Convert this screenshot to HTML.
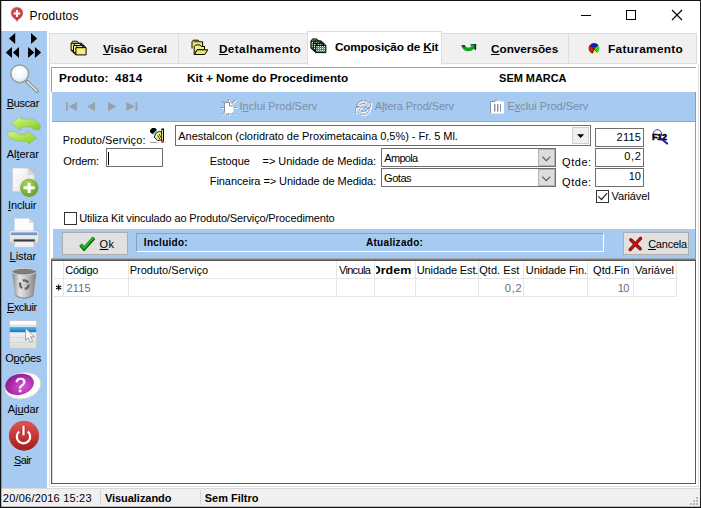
<!DOCTYPE html>
<html>
<head>
<meta charset="utf-8">
<title>Produtos</title>
<style>
*{box-sizing:border-box;margin:0;padding:0}
html,body{width:701px;height:508px;overflow:hidden;background:#f0f0f0}
body{font-family:"Liberation Sans",sans-serif;font-size:11px;color:#000;position:relative}
#w,#w div,#w svg{position:absolute}
#w{left:0;top:0;width:701px;height:508px;overflow:hidden}
u{text-decoration:underline;text-decoration-thickness:1px;text-underline-offset:1px}
.t{white-space:nowrap}
.blue{background:#a6caf0}
.inp{background:#fff;border:1px solid #6e6e6e}
.btn{background:#e1e1e1;border:1px solid #adadad}
.vl{top:261px;width:1px;height:36px;background:#e6e6e6}
.hl{left:52px;width:625px;height:1px;background:#e6e6e6}
.sep{top:490px;width:1px;height:15px;background:#d4d4d4}
</style>
</head>
<body>
<div id="w">
  <!-- title bar -->
  <div style="left:0;top:0;width:701px;height:31px;background:#fff"></div>
  <!-- sidebar -->
  <div class="blue" style="left:1px;top:31px;width:46px;height:457px"></div>
  <!-- tab page -->
  <div style="left:47px;top:31px;width:653px;height:457px;background:#fff"></div>
    <div style="left:49px;top:64px;width:650px;height:423px;background:#fff;border:1px solid #dcdcdc;border-top-color:#fcfcfc"></div>
      <!-- tabs -->
  <div style="left:49px;top:33px;width:130px;height:31px;background:#f0f0f0;border:1px solid #dcdcdc"></div>
  <div style="left:178px;top:33px;width:130px;height:31px;background:#f0f0f0;border:1px solid #dcdcdc"></div>
  <div style="left:441px;top:33px;width:128px;height:31px;background:#f0f0f0;border:1px solid #dcdcdc"></div>
  <div style="left:568px;top:33px;width:129px;height:31px;background:#f0f0f0;border:1px solid #dcdcdc"></div>
  <div style="left:307px;top:31px;width:135px;height:34px;background:#fff;border:1px solid #dcdcdc;border-bottom:none"></div>
  <!-- inner panel (sunken) -->
  <div style="left:51px;top:67px;width:645px;height:1px;background:#a0a0a0"></div>
  <div style="left:51px;top:67px;width:1px;height:26px;background:#a0a0a0"></div>
  <!-- toolbar -->
  <div class="blue" style="left:52px;top:92px;width:643px;height:29px"></div>
  <div style="left:51px;top:121px;width:645px;height:1px;background:#a4a4a4"></div>
  <div style="left:695px;top:92px;width:1px;height:168px;background:#9a9a9a"></div>
  <div style="left:51px;top:92px;width:1px;height:168px;background:#fff"></div>
  <!-- form fields -->
  <div class="inp" style="left:106px;top:148px;width:57px;height:19px"></div>
  <div style="left:108px;top:152px;width:1px;height:13px;background:#000"></div>
  <div class="inp" style="left:175px;top:125px;width:416px;height:21px"></div>
  <div style="left:572px;top:127px;width:17px;height:17px;background:#f0f0f0;border:1px solid #cfcfcf"></div>
  <div class="inp" style="left:381px;top:148px;width:175px;height:19px"></div>
  <div style="left:538px;top:149px;width:17px;height:17px;background:#dddddd;border:1px solid #b4b4b4"></div>
  <div class="inp" style="left:381px;top:168px;width:175px;height:19px"></div>
  <div style="left:538px;top:169px;width:17px;height:17px;background:#dddddd;border:1px solid #b4b4b4"></div>
  <div class="inp" style="left:595px;top:128px;width:49px;height:19px"></div>
  <div class="inp" style="left:595px;top:148px;width:49px;height:19px"></div>
  <div class="inp" style="left:595px;top:168px;width:49px;height:19px"></div>
  <div style="left:596px;top:190px;width:13px;height:13px;background:#fff;border:1px solid #333"></div>
  <div style="left:64px;top:212px;width:13px;height:13px;background:#fff;border:1px solid #333"></div>
  <!-- blue bar -->
  <div class="blue" style="left:53px;top:229px;width:642px;height:29px"></div>
  <div class="btn" style="left:62px;top:232px;width:66px;height:23px"></div>
  <div class="btn" style="left:623px;top:232px;width:66px;height:23px"></div>
  <div style="left:136px;top:233px;width:468px;height:19px;border:1px solid #8ca0b8;border-right-color:#fff;border-bottom-color:#fff"></div>
  <!-- grid -->
  <div style="left:51px;top:258px;width:645px;height:226px;background:#fff;border:1px solid #5a5a5a;border-top:3px solid #585858"></div>
  <div style="left:51px;top:258px;width:645px;height:1px;background:#a4a8ac"></div>
  <div style="left:51px;top:259px;width:645px;height:1px;background:#7c7c7c"></div>
  <div style="left:52px;top:261px;width:1px;height:222px;background:#d8d8d8"></div>
  <div class="hl" style="top:278px"></div>
  <div class="hl" style="top:296px"></div>
  <div class="vl" style="left:63px"></div>
  <div class="vl" style="left:128px"></div>
  <div class="vl" style="left:336px"></div>
  <div class="vl" style="left:374px"></div>
  <div class="vl" style="left:415px"></div>
  <div class="vl" style="left:478px"></div>
  <div class="vl" style="left:523px"></div>
  <div class="vl" style="left:587px"></div>
  <div class="vl" style="left:633px"></div>
  <div class="vl" style="left:676px"></div>
  <!-- status bar -->
  <div style="left:1px;top:488px;width:699px;height:19px;background:#f0f0f0;border-top:1px solid #d9d9d9"></div>
  <div class="sep" style="left:100px"></div>
  <div class="sep" style="left:200px"></div>

  <!-- ICONS -->
  <svg style="left:0;top:0" width="701" height="508" viewBox="0 0 701 508">
    <defs>
      <radialGradient id="pin" cx="0.45" cy="0.3" r="0.8"><stop offset="0" stop-color="#e45058"/><stop offset="1" stop-color="#a82830"/></radialGradient>
      <radialGradient id="lens" cx="0.45" cy="0.35" r="0.75"><stop offset="0" stop-color="#ffffff"/><stop offset="0.550" stop-color="#f2f8ff"/><stop offset="1" stop-color="#bcd6f4"/></radialGradient>
      <linearGradient id="grn" x1="0" y1="0" x2="0.800" y2="1"><stop offset="0" stop-color="#dcf6a4"/><stop offset="0.450" stop-color="#b8e65c"/><stop offset="1" stop-color="#86cc2c"/></linearGradient>
      <linearGradient id="grn2" x1="0" y1="0" x2="0.800" y2="1"><stop offset="0" stop-color="#d4f298"/><stop offset="0.500" stop-color="#b2e252"/><stop offset="1" stop-color="#8ad030"/></linearGradient>
      <linearGradient id="doc" x1="0" y1="0" x2="1" y2="1"><stop offset="0" stop-color="#ffffff"/><stop offset="1" stop-color="#e2e2e2"/></linearGradient>
      <radialGradient id="plus" cx="0.4" cy="0.3" r="0.8"><stop offset="0" stop-color="#a8d858"/><stop offset="1" stop-color="#5c9c1c"/></radialGradient>
      <linearGradient id="prn" x1="0" y1="0" x2="0" y2="1"><stop offset="0" stop-color="#ffffff"/><stop offset="1" stop-color="#d4d4d4"/></linearGradient>
      <linearGradient id="can" x1="0" y1="0" x2="1" y2="0"><stop offset="0" stop-color="#8a8a8a"/><stop offset="0.320" stop-color="#e6e6e6"/><stop offset="0.650" stop-color="#bababa"/><stop offset="1" stop-color="#7e7e7e"/></linearGradient>
      <linearGradient id="opt" x1="0" y1="0" x2="0" y2="1"><stop offset="0" stop-color="#ffffff"/><stop offset="1" stop-color="#dcdcdc"/></linearGradient>
      <linearGradient id="optb" x1="0" y1="0" x2="0" y2="1"><stop offset="0" stop-color="#58b8ee"/><stop offset="1" stop-color="#1474c4"/></linearGradient>
      <radialGradient id="hlp" cx="0.6" cy="0.65" r="0.8"><stop offset="0" stop-color="#d858d0"/><stop offset="0.6" stop-color="#a828a8"/><stop offset="1" stop-color="#70187c"/></radialGradient>
      <linearGradient id="pwr" x1="0" y1="0" x2="0" y2="1"><stop offset="0" stop-color="#e25454"/><stop offset="1" stop-color="#a41c1c"/></linearGradient>
    </defs>
    <!-- title icon -->
    <path d="M17 21.900C16.300 20.200 15.200 19.300 13.700 18.200A6.100 6.100 0 1 1 20.300 18.200C18.800 19.300 17.700 20.200 17 21.900Z" fill="url(#pin)" stroke="#e4c4c4" stroke-width="0.600"/>
    <path d="M16 10h2v2.400h2.300v2h-2.300v2.500h-2v-2.500h-2.300v-2h2.300z" fill="#fff"/>
    <!-- window buttons -->
    <path d="M581 15.500h10" stroke="#000" stroke-width="1"/>
    <rect x="626.500" y="10.500" width="9" height="9" fill="none" stroke="#000" stroke-width="1"/>
    <path d="M672 10l10 10M682 10l-10 10" stroke="#000" stroke-width="1.100"/>
    <!-- sidebar arrows -->
    <path d="M15.200 33v11L9 38.500zM31 33v11l6.200-5.500zM12 47v11L5.800 52.500zM19 47v11l-6-5.500zM28.100 47v11l6.100-5.500zM34.900 47v11l6.200-5.500z" fill="#000"/>
    <!-- Buscar -->
    <line x1="27" y1="81.500" x2="37" y2="91.300" stroke="#8c8c8c" stroke-width="3.400" stroke-linecap="round"/>
    <line x1="27.500" y1="82" x2="36.800" y2="91" stroke="#ececec" stroke-width="1.500" stroke-linecap="round"/>
    <circle cx="19.700" cy="73.800" r="8.900" fill="url(#lens)" stroke="#9c9c9c" stroke-width="1.500"/>
    <!-- Alterar -->
    <path d="M11.100 123L20.700 116.300L21 119.100C25 118.800 29 118.800 32.400 119.400C37 120.500 40 123.500 40.500 127.200C40.300 128.500 39.600 129.400 38.800 129.700L33.800 129.400C33.200 128.300 32.200 127.500 31 127.200C28 126.600 24 126.700 21 126.900L20 130.100Z" fill="url(#grn)" stroke="#8ebc50" stroke-width="0.600"/>
    <path d="M36.600 137.900L28.800 144.300L27.400 141.400C24 141.700 21 141.600 18.200 141.100C13 140.200 9.500 138 8.300 135.400C7.500 134 7.200 133 7.200 132.200L16 131.500C16.600 132.800 17.600 133.800 18.900 134.300C21.500 134.700 24 134.500 26.700 134L27 130.800Z" fill="url(#grn2)" stroke="#8ebc50" stroke-width="0.600"/>
    <!-- Incluir -->
    <path d="M12.500 168 H28 L34.600 174.600 V191.700 H12.500 Z" fill="url(#doc)" stroke="#c4c8cc" stroke-width="0.700"/>
    <path d="M28 168 V174.600 H34.600 Z" fill="#dadada" stroke="#c4c8cc" stroke-width="0.500"/>
    <circle cx="29.200" cy="187.800" r="9.200" fill="url(#plus)"/>
    <path d="M27.700 182.800h3v3.500h4v3h-4v3.700h-3v-3.700h-4.200v-3h4.200z" fill="#fff"/>
    <!-- Listar -->
    <path d="M14.300 218.300 H29 L33.600 223 V233 H14.300Z" fill="#fdfdfd" stroke="#c8ccd0" stroke-width="0.600"/>
    <path d="M29 218.300 V223 H33.600Z" fill="#dcdcdc"/>
    <rect x="9.400" y="231" width="29.300" height="12.300" rx="2" fill="url(#prn)" stroke="#bcc0c4" stroke-width="0.700"/>
    <rect x="10.800" y="232.400" width="26.500" height="2.800" fill="#6f98cc"/>
    <path d="M15 241.200 H33.300 L34.300 247.300 H13.800 Z" fill="#f2f2f2" stroke="#c2c2c2" stroke-width="0.600"/>
    <rect x="13.800" y="239.400" width="21" height="2.100" fill="#3a3a3a"/>
    <!-- Excluir -->
    <path d="M12.200 272 L15 296 Q24.300 300.600 33.600 296 L36.300 272 Z" fill="url(#can)"/>
    <ellipse cx="24.200" cy="271.600" rx="12.300" ry="3.300" fill="#7c7c7c" stroke="#d0d0d0" stroke-width="1"/>
    <path d="M15.500 295.500Q24.300 300.800 33.100 295.500" fill="none" stroke="#8a8a8a" stroke-width="1.400"/>
    <circle cx="24.400" cy="284.600" r="4.300" fill="none" stroke="#626262" stroke-width="2.300" stroke-dasharray="6.200 2.800"/>
    <!-- Opcoes -->
    <rect x="9.700" y="320.700" width="26.600" height="27.600" fill="url(#opt)" stroke="#c6c6c6" stroke-width="0.600"/>
    <path d="M10 337.500h26M10 342.500h26M10 325.500h26" stroke="#d4d4d4" stroke-width="0.800"/>
    <rect x="9.700" y="326.800" width="26.600" height="5.400" fill="url(#optb)"/>
    <path d="M25.600 328.300 L25.600 340.300 L28.300 337.700 L30.500 342.200 L32.700 341.200 L30.500 336.800 L34.300 336.700 Z" fill="#fff" stroke="#8c8c8c" stroke-width="0.800"/>
    <!-- Ajudar -->
    <g transform="rotate(-14 22 385)">
      <ellipse cx="22.600" cy="386" rx="18.200" ry="13" fill="#fff" stroke="#ccd0d8" stroke-width="0.800"/>
      <ellipse cx="19.800" cy="383.800" rx="14.500" ry="10.400" fill="url(#hlp)"/>
    </g>
    <text x="20.400" y="392" font-family="Liberation Sans, sans-serif" font-size="19.500" fill="#fff" stroke="#fff" stroke-width="0.300" text-anchor="middle">?</text>
    <!-- Sair -->
    <circle cx="24" cy="435.700" r="15" fill="url(#pwr)"/>
    <path d="M27.800 431.500 A6.700 6.700 0 1 1 19.200 431.500" fill="none" stroke="#fff" stroke-width="2.200"/>
    <path d="M23.500 425.700 V435.400" stroke="#c03030" stroke-width="4.600"/>
    <path d="M23.500 425.700 V435.400" stroke="#fff" stroke-width="2.200"/>
    <!-- tab icons -->
    <pattern id="dg" width="2" height="2" patternUnits="userSpaceOnUse"><rect width="2" height="2" fill="#18a040"/><rect width="1" height="1" fill="#d8f8dc"/><rect x="1" y="1" width="1" height="1" fill="#48b868"/></pattern>
    <path d="M71.1 43.2H81.3V50.5H71.1Z" fill="#f4f07c" stroke="#000" stroke-width="1"/>
    <path d="M71.5 43.2L72.6 41.2H77.1L78.7 43.2Z" fill="#fbfbc8" stroke="#000" stroke-width="0.9"/>
    <path d="M73.5 45.4H83.7V52.7H73.5Z" fill="#f4f07c" stroke="#000" stroke-width="1"/>
    <path d="M73.9 45.4L75.0 43.4H79.5L81.1 45.4Z" fill="#fbfbc8" stroke="#000" stroke-width="0.9"/>
    <path d="M75.9 47.6H86.1V54.9H75.9Z" fill="#f4f07c" stroke="#000" stroke-width="1"/>
    <path d="M76.3 47.6L77.4 45.6H81.9L83.5 47.6Z" fill="#fbfbc8" stroke="#000" stroke-width="0.9"/>
    <path d="M81.3 43.2L86.1 47.6" stroke="#000" stroke-width="1"/>
    <path d="M71.1 50.5L75.9 54.9" stroke="#000" stroke-width="1"/>
    <path d="M310.9 40.9H321.1V48.2H310.9Z" fill="url(#dg)" stroke="#000" stroke-width="1"/>
    <path d="M311.3 40.9L312.4 38.9H316.9L318.5 40.9Z" fill="url(#dg)" stroke="#000" stroke-width="0.9"/>
    <path d="M313.3 43.1H323.5V50.4H313.3Z" fill="url(#dg)" stroke="#000" stroke-width="1"/>
    <path d="M313.7 43.1L314.8 41.1H319.3L320.9 43.1Z" fill="url(#dg)" stroke="#000" stroke-width="0.9"/>
    <path d="M315.7 45.3H325.9V52.6H315.7Z" fill="url(#dg)" stroke="#000" stroke-width="1"/>
    <path d="M316.1 45.3L317.2 43.3H321.7L323.3 45.3Z" fill="url(#dg)" stroke="#000" stroke-width="0.9"/>
    <path d="M321.1 40.9L325.9 45.3" stroke="#000" stroke-width="1"/>
    <path d="M310.9 48.2L315.7 52.6" stroke="#000" stroke-width="1"/>
    <path d="M192 48.500V41.800L193.200 40.200H198.200L199.400 41.800H202.600V47" fill="#f2ee7c" stroke="#000" stroke-width="1"/>
    <path d="M193.600 41.800H199" stroke="#000" stroke-width="0.800"/>
    <path d="M194.200 54.500V46.500L195.600 44.900H200L201.400 46.500H204.500V49.800H197.200Z" fill="#f2ee7c" stroke="#000" stroke-width="1"/>
    <path d="M194.400 54.500L197.200 49.800H207.800L204.800 54.500Z" fill="#ece868" stroke="#000" stroke-width="1"/>
    <path d="M461.300 45.200L464.600 45C465.500 47.500 469 48.500 471.500 46.600L469.800 44.600L476.200 43.900L476 50.200L474 48.800C470 53 463 52 461.300 45.200Z" fill="#10a818"/>
    <path d="M469.800 44.600L476.200 43.900L476 50.200L474 48.800L475 45.200Z" fill="#0a2a38"/>
    <path d="M461.300 45.200L464.600 45C465 46 465.500 46.600 466 47L463 47.500Z" fill="#0a5a14"/>
    <g>
      <path d="M594.200 48.300L589.940 45.320A5.200 5.200 0 0 1 598.180 44.960Z" fill="#1414c8"/>
      <path d="M594.200 48.300L598.180 44.960A5.200 5.200 0 0 1 597.540 52.280Z" fill="#20d838"/>
      <path d="M594.200 48.300L597.540 52.280A5.200 5.200 0 0 1 592.420 53.190Z" fill="#f8f020"/>
      <path d="M594.200 48.300L592.420 53.190A5.200 5.200 0 0 1 589.940 45.320Z" fill="#e81818"/>
      <path d="M589.940 45.320L597.540 52.280M594.200 48.300L598.180 44.960M594.200 48.300L592.420 53.190" stroke="#101010" stroke-width="0.800"/>
      <path d="M589.940 45.320A5.200 5.200 0 0 0 592.420 53.190" stroke="#301010" stroke-width="0.800" fill="none"/>
    </g>
    <!-- toolbar nav -->
    <g fill="#98a0aa">
      <rect x="66" y="102" width="1.700" height="9"/><path d="M77 102v9l-8.500-4.500z"/>
      <path d="M95 102v9l-8.200-4.500z"/>
      <path d="M108 102v9l8.400-4.500z"/>
      <path d="M126.400 102v9l8.500-4.500z"/><rect x="135.500" y="102" width="1.700" height="9"/>
    </g>
    <!-- toolbar disabled icons -->
    <g fill="none" stroke-width="1">
      <!-- inclui -->
      <path d="M224.500 102.500h5.500l3.500 3.500v7h-9z" fill="#fff" stroke="none"/>
      <path d="M222.500 101.500l2.500 2.500M229.500 100v2M236.500 100.500l-4 4M222 108.500h2.500M235 108.500h2M223 115.500l2-2M229.500 114.500v2M236 115.500l-2-2" stroke="#fff"/>
      <path d="M221.500 100.500l2.500 2.500M228.500 99v2M235.500 99.500l-3.500 3.500M221 107.500h2.500M234 107.500h2M222 114.500l2-2M228.500 113.500v2M235 114.500l-2-2" stroke="#8791a0"/>
      <path d="M224.500 112.500v-10h5M229.500 102.500v3.500h3.500" stroke="#8791a0"/>
      <!-- altera -->
      <path d="M356.500 106.500c0.500-4 3.500-6 6.500-6c2.500 0 4.500 1 6 3l1.500-1.500v5.500h-5.500l2-2c-1-1.500-2.500-2-4-2c-2 0-3.500 1-4 3z" fill="#c4dcf6" stroke="#fff" transform="translate(1 1)"/>
      <path d="M369.500 108.500c-0.500 4-3.500 6-6.500 6c-2.500 0-4.500-1-6-3l-1.500 1.500v-5.500h5.500l-2 2c1 1.500 2.500 2 4 2c2 0 3.500-1 4-3z" fill="#c4dcf6" stroke="#fff" transform="translate(1 1)"/>
      <path d="M356.500 106.500c0.500-4 3.500-6 6.500-6c2.500 0 4.500 1 6 3l1.500-1.500v5.500h-5.500l2-2c-1-1.500-2.500-2-4-2c-2 0-3.500 1-4 3z" stroke="#8791a0" stroke-dasharray="2.500 1"/>
      <path d="M369.500 108.500c-0.500 4-3.500 6-6.500 6c-2.500 0-4.500-1-6-3l-1.500 1.500v-5.500h5.500l-2 2c1 1.500 2.500 2 4 2c2 0 3.500-1 4-3z" stroke="#8791a0" stroke-dasharray="2.500 1"/>
      <!-- exclui -->
      <path d="M490.500 101.500h4.500v-2h5v2h4v12h-13.500z" fill="#fff" stroke="none"/>
      <path d="M490.500 113v-11.500h4.500v-1.500h4.500" stroke="#8791a0"/>
      <path d="M494.500 104v7.500M497.500 104v7.500M500.500 104v7.500" stroke="#8791a0"/>
      <path d="M495.500 104v7.500M498.500 104v7.500" stroke="#c8d0da"/>
    </g>
    <!-- hand icon -->
    <path d="M155.900 133.400L158.700 131.600L161.400 131.800L163 138.200L162.500 139.800L157.800 140.500L154.200 137.200Z" fill="#f8f288" stroke="#000" stroke-width="0.900"/>
    <path d="M159 134l2.500 4.500M157.500 135.500l2.500 3.800" stroke="#000" stroke-width="0.800"/>
    <path d="M162.700 128.500V141.500" stroke="#000" stroke-width="2.600"/>
    <path d="M162.500 130V140.500" stroke="#f8f288" stroke-width="0.900"/>
    <path d="M150 130.200L152.100 127.900L155.300 127.900L156.900 130.100L152.600 134.300L150.100 132.200Z" fill="#000"/>
    <path d="M152.900 134.600L157.100 130.700" stroke="#38dcec" stroke-width="1.500"/>
    <rect x="161.200" y="141.400" width="2.600" height="1.400" fill="#d83010"/>
    <path d="M150 142.400h6.800M158.200 142.400h0.800M165.200 142.400h0.800" stroke="#8a8a8a" stroke-width="0.900"/>
    <!-- combo arrows -->
    <path d="M577 134.200h7.200l-3.600 3.800z" fill="#000"/>
    <path d="M542.300 156.600l4 4l4-4" fill="none" stroke="#555" stroke-width="1.100"/>
    <path d="M542.300 176.600l4 4l4-4" fill="none" stroke="#555" stroke-width="1.100"/>
    <!-- F12 icon -->
    <circle cx="657.400" cy="133.900" r="4.200" fill="none" stroke="#1c1c98" stroke-width="0.900"/>
    <text x="652.100" y="139.700" font-family="Liberation Sans, sans-serif" font-weight="bold" font-size="9" fill="#000" stroke="#000" stroke-width="0.500" letter-spacing="-0.300">F12</text>
    <path d="M661.300 138.800l5.800 4.800" stroke="#1818b0" stroke-width="2" stroke-linecap="round"/>
    <!-- checkbox check -->
    <path d="M598.300 196.300l3.200 3.200l5.600-6.400" fill="none" stroke="#2a2a2a" stroke-width="1.200"/>
    <!-- ok check -->
    <path d="M80.600 244.800L84.100 248.800L94 237.800" fill="none" stroke="#0a600a" stroke-width="3.600" stroke-linejoin="miter"/>
    <path d="M80.700 244.300L84.100 248.100L93.800 237.400" fill="none" stroke="#1cbc20" stroke-width="2" stroke-linejoin="miter"/>
    <!-- cancel X -->
    <path d="M630.800 239.700L640.200 248.700M640.600 238.400L630.200 249.600" fill="none" stroke="#a00c0c" stroke-width="3.400" stroke-linecap="round"/>
    <path d="M631 239.600L640 248.300M640.300 238.400L630.500 249" fill="none" stroke="#b81818" stroke-width="1.400" stroke-linecap="round"/>
    <!-- grid indicator star -->
    <path d="M58.700 284.500v6M56.100 286l5.200 3M61.300 286l-5.200 3" stroke="#000" stroke-width="1.100"/>
    <!-- size grip -->
    <g fill="#b8b8b8">
      <rect x="696" y="497" width="2" height="2"/><rect x="693" y="500" width="2" height="2"/><rect x="696" y="500" width="2" height="2"/>
      <rect x="690" y="503" width="2" height="2"/><rect x="693" y="503" width="2" height="2"/><rect x="696" y="503" width="2" height="2"/>
    </g>
  </svg>

<div class="t" style="left:29.53px;top:8px;font-size:12px;line-height:16px;height:16px;letter-spacing:0.120px;">Produtos</div>
<div class="t" style="left:6.64px;top:96px;font-size:11px;line-height:14px;height:14px;letter-spacing:-0.309px;"><u>B</u>uscar</div>
<div class="t" style="left:6.68px;top:147px;font-size:11px;line-height:14px;height:14px;letter-spacing:-0.009px;">Al<u>t</u>erar</div>
<div class="t" style="left:8.05px;top:198px;font-size:11px;line-height:14px;height:14px;letter-spacing:-0.179px;"><u>I</u>ncluir</div>
<div class="t" style="left:9.61px;top:249px;font-size:11px;line-height:14px;height:14px;letter-spacing:-0.070px;"><u>L</u>istar</div>
<div class="t" style="left:7.01px;top:300px;font-size:11px;line-height:14px;height:14px;letter-spacing:-0.490px;"><u>E</u>xcluir</div>
<div class="t" style="left:5.20px;top:351px;font-size:11px;line-height:14px;height:14px;letter-spacing:-0.361px;">O<u>p</u>ções</div>
<div class="t" style="left:7.68px;top:402px;font-size:11px;line-height:14px;height:14px;letter-spacing:-0.040px;">Aj<u>u</u>dar</div>
<div class="t" style="left:14.08px;top:453px;font-size:11px;line-height:14px;height:14px;letter-spacing:-0.654px;"><u>S</u>air</div>
<div class="t" style="left:102.86px;top:42px;font-size:11px;line-height:14px;height:14px;letter-spacing:-0.042px;font-weight:bold;transform:scaleX(1.07);transform-origin:0 0;"><u>V</u>isão Geral</div>
<div class="t" style="left:219.47px;top:42px;font-size:11px;line-height:14px;height:14px;letter-spacing:0.333px;font-weight:bold;transform:scaleX(1.07);transform-origin:0 0;"><u>D</u>etalhamento</div>
<div class="t" style="left:334.74px;top:40px;font-size:11px;line-height:14px;height:14px;letter-spacing:-0.183px;font-weight:bold;transform:scaleX(1.07);transform-origin:0 0;">Composição de <u>K</u>it</div>
<div class="t" style="left:490.59px;top:42px;font-size:11px;line-height:14px;height:14px;letter-spacing:-0.021px;font-weight:bold;transform:scaleX(1.07);transform-origin:0 0;"><u>C</u>onversões</div>
<div class="t" style="left:607.96px;top:42px;font-size:11px;line-height:14px;height:14px;letter-spacing:0.326px;font-weight:bold;transform:scaleX(1.07);transform-origin:0 0;">Faturamento</div>
<div class="t" style="left:58.96px;top:71px;font-size:11px;line-height:14px;height:14px;letter-spacing:0.043px;font-weight:bold;transform:scaleX(1.07);transform-origin:0 0;">Produto:</div>
<div class="t" style="left:115.34px;top:71px;font-size:11px;line-height:14px;height:14px;letter-spacing:0.314px;font-weight:bold;transform:scaleX(1.07);transform-origin:0 0;">4814</div>
<div class="t" style="left:186.96px;top:71px;font-size:11px;line-height:14px;height:14px;font-weight:bold;transform:scaleX(1.07);transform-origin:0 0;">Kit + Nome do Procedimento</div>
<div class="t" style="left:499.12px;top:71px;font-size:11px;line-height:14px;height:14px;letter-spacing:-0.049px;font-weight:bold;">SEM MARCA</div>
<div class="t" style="left:239.49px;top:99px;font-size:11px;line-height:14px;height:14px;letter-spacing:0.005px;color:#7f8da2;">I<u>n</u>clui Prod/Serv</div>
<div class="t" style="left:374.68px;top:99px;font-size:11px;line-height:14px;height:14px;letter-spacing:-0.089px;color:#7f8da2;">A<u>l</u>tera Prod/Serv</div>
<div class="t" style="left:507.54px;top:99px;font-size:11px;line-height:14px;height:14px;letter-spacing:-0.044px;color:#7f8da2;">E<u>x</u>clui Prod/Serv</div>
<div class="t" style="left:62.80px;top:133px;font-size:11px;line-height:14px;height:14px;letter-spacing:0.090px;">Produto/Serviço:</div>
<div class="t" style="left:63.27px;top:154px;font-size:11px;line-height:14px;height:14px;letter-spacing:-0.152px;">Ordem:</div>
<div class="t" style="left:178.32px;top:129px;font-size:11px;line-height:14px;height:14px;letter-spacing:-0.040px;">Anestalcon (cloridrato de Proximetacaina 0,5%) - Fr. 5 Ml.</div>
<div class="t" style="left:209.80px;top:154px;font-size:11px;line-height:14px;height:14px;letter-spacing:-0.047px;">Estoque</div>
<div class="t" style="left:262.50px;top:154px;font-size:11px;line-height:14px;height:14px;letter-spacing:-0.038px;">=&gt; Unidade de Medida:</div>
<div class="t" style="left:209.80px;top:174px;font-size:11px;line-height:14px;height:14px;letter-spacing:-0.076px;">Financeira =&gt; Unidade de Medida:</div>
<div class="t" style="left:384.36px;top:151px;font-size:11px;line-height:14px;height:14px;letter-spacing:-0.711px;">Ampola</div>
<div class="t" style="left:384.04px;top:171px;font-size:11px;line-height:14px;height:14px;letter-spacing:-0.450px;">Gotas</div>
<div class="t" style="left:562.06px;top:155px;font-size:11px;line-height:14px;height:14px;letter-spacing:0.547px;">Qtde:</div>
<div class="t" style="left:562.06px;top:175px;font-size:11px;line-height:14px;height:14px;letter-spacing:0.547px;">Qtde:</div>
<div class="t" style="left:616.50px;top:130px;font-size:11px;line-height:14px;height:14px;letter-spacing:0.271px;">2115</div>
<div class="t" style="left:624.14px;top:149px;font-size:11px;line-height:14px;height:14px;letter-spacing:0.760px;">0,2</div>
<div class="t" style="left:628.71px;top:169px;font-size:11px;line-height:14px;height:14px;letter-spacing:-0.170px;">10</div>
<div class="t" style="left:611.52px;top:189px;font-size:11px;line-height:14px;height:14px;letter-spacing:-0.101px;">Variável</div>
<div class="t" style="left:79.16px;top:211px;font-size:11px;line-height:14px;height:14px;letter-spacing:-0.142px;">Utiliza Kit vinculado ao Produto/Serviço/Procedimento</div>
<div class="t" style="left:99.62px;top:237px;font-size:11px;line-height:14px;height:14px;letter-spacing:0.283px;"><u>O</u>k</div>
<div class="t" style="left:143.86px;top:236px;font-size:10px;line-height:14px;height:14px;letter-spacing:0.271px;font-weight:bold;">Incluido:</div>
<div class="t" style="left:365.95px;top:236px;font-size:10px;line-height:14px;height:14px;letter-spacing:0.311px;font-weight:bold;">Atualizado:</div>
<div class="t" style="left:648.14px;top:237px;font-size:11px;line-height:14px;height:14px;letter-spacing:-0.215px;"><u>C</u>ancela</div>
<div class="t" style="left:65.36px;top:263px;font-size:11px;line-height:14px;height:14px;letter-spacing:-0.395px;">Código</div>
<div class="t" style="left:129.66px;top:263px;font-size:11px;line-height:14px;height:14px;letter-spacing:0.006px;">Produto/Serviço</div>
<div class="t" style="left:338.94px;top:263px;font-size:11px;line-height:14px;height:14px;letter-spacing:-0.671px;">Vincula</div>
<div style="left:376px;top:263px;width:60px;height:14px;overflow:hidden"><div class="t" style="left:371.44px;top:263px;font-size:11px;line-height:14px;height:14px;letter-spacing:0.036px;font-weight:bold;transform:scaleX(1.13);transform-origin:0 0;left:-4.56px;top:0">Ordem</div></div>
<div class="t" style="left:416.75px;top:263px;font-size:11px;line-height:14px;height:14px;letter-spacing:-0.119px;">Unidade Est.</div>
<div class="t" style="left:479.20px;top:263px;font-size:11px;line-height:14px;height:14px;letter-spacing:0.064px;">Qtd. Est</div>
<div class="t" style="left:525.84px;top:263px;font-size:11px;line-height:14px;height:14px;letter-spacing:-0.111px;">Unidade Fin.</div>
<div class="t" style="left:593.02px;top:263px;font-size:11px;line-height:14px;height:14px;letter-spacing:0.066px;">Qtd.Fin</div>
<div class="t" style="left:635.10px;top:263px;font-size:11px;line-height:14px;height:14px;letter-spacing:-0.013px;">Variável</div>
<div class="t" style="left:66.50px;top:281px;font-size:11px;line-height:14px;height:14px;letter-spacing:0.167px;color:#6d6d6d;">2115</div>
<div class="t" style="left:504.76px;top:281px;font-size:11px;line-height:14px;height:14px;letter-spacing:0.845px;color:#6d6d6d;">0,2</div>
<div class="t" style="left:617.71px;top:281px;font-size:11px;line-height:14px;height:14px;letter-spacing:-0.483px;color:#6d6d6d;">10</div>
<div class="t" style="left:2.85px;top:491px;font-size:11px;line-height:14px;height:14px;letter-spacing:0.201px;">20/06/2016 15:23</div>
<div class="t" style="left:104.90px;top:491px;font-size:11px;line-height:14px;height:14px;letter-spacing:-0.039px;font-weight:bold;">Visualizando</div>
<div class="t" style="left:204.70px;top:491px;font-size:11px;line-height:14px;height:14px;letter-spacing:-0.004px;font-weight:bold;">Sem Filtro</div>

  <!-- window frame -->
  <div style="left:0;top:0;width:701px;height:1px;background:#111"></div>
  <div style="left:0;top:0;width:1px;height:508px;background:#111"></div>
  <div style="left:700px;top:0;width:1px;height:508px;background:#222"></div>
  <div style="left:0;top:507px;width:701px;height:1px;background:#111"></div>
  <div style="left:1px;top:506px;width:699px;height:1px;background:rgba(0,0,0,.22)"></div>
  <div style="left:1px;top:1px;width:1px;height:506px;background:rgba(0,0,0,.25)"></div>
</div>
</body>
</html>
